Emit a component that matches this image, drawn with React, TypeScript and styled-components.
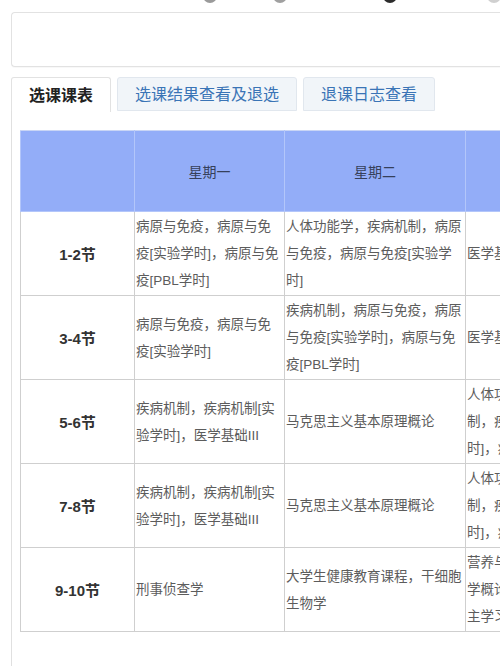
import React from "react";
import styled, { createGlobalStyle } from "styled-components";

const Global = createGlobalStyle`
  html, body {
    margin: 0;
    padding: 0;
    background: #ffffff;
    overflow: hidden;
  }
  body {
    font-family: "Liberation Sans", "Noto Sans CJK SC", sans-serif;
  }
`;

const Page = styled.div`
  width: 900px;
  height: 666px;
  overflow: hidden;
  display: flex;
  flex-direction: column;
`;

const IconStrip = styled.div`
  height: 5px;
  overflow: hidden;
  display: flex;
  align-items: flex-start;
  padding-left: 203px;
  gap: 56px;
`;

const IconStub = styled.div<{ $c: string; $gap?: number }>`
  width: 14px;
  height: 14px;
  border-radius: 50%;
  background: ${(p) => p.$c};
  margin-top: -11px;
  margin-left: ${(p) => p.$gap ?? 0}px;
  flex: none;
`;

const Body = styled.div`
  flex: 1;
  display: flex;
  flex-direction: column;
  padding: 7px 0 0 11px;
  min-height: 0;
`;

const TopBox = styled.div`
  height: 53px;
  border: 1px solid #e2e2e2;
  border-right: none;
  border-radius: 4px 0 0 4px;
  background: #fff;
  box-shadow: 0 1px 1px rgba(0, 0, 0, 0.03);
  flex: none;
`;

const TabBar = styled.div`
  display: flex;
  align-items: flex-start;
  gap: 6px;
  margin-top: 10px;
  height: 34px;
  flex: none;
`;

const Tab = styled.div<{ $active?: boolean }>`
  padding: 0 17px 2px;
  display: flex;
  align-items: center;
  font-size: 16px;
  font-family: "Noto Sans CJK SC", sans-serif;
  border: 1px solid ${(p) => (p.$active ? "#e2e2e2" : "#e1e7ee")};
  border-bottom: ${(p) => (p.$active ? "none" : "1px solid #e1e7ee")};
  border-radius: 3px 3px 0 0;
  background: ${(p) => (p.$active ? "#ffffff" : "#f1f5f9")};
  color: ${(p) => (p.$active ? "#222222" : "#3a74b6")};
  font-weight: ${(p) => (p.$active ? 700 : 400)};
  height: ${(p) => (p.$active ? "32px" : "30px")};
`;

const Panel = styled.div`
  flex: 1;
  border-left: 1px solid #e0e0e0;
  padding: 19px 0 0 8px;
`;

const Table = styled.table`
  border-collapse: collapse;
  table-layout: fixed;
  width: 760px;
  font-size: 13.5px;
  color: #5c5c5c;
`;

const HeadCell = styled.th`
  background: #93adf8;
  border: 1px solid #b3c6fa;
  border-top-color: #c9d5f5;
  color: #36405a;
  font-weight: 400;
  font-size: 14px;
  font-family: "Noto Sans CJK SC", sans-serif;
  text-align: center;
  vertical-align: middle;
  height: 80px;
  padding: 0;
`;

const Row = styled.tr`
  height: 84px;
`;

const LabelCell = styled.td`
  border: 1px solid #cfcfcf;
  text-align: center;
  vertical-align: middle;
  font-weight: 700;
  font-size: 15px;
  color: #333;
  padding: 0;
`;

const CourseCell = styled.td`
  border: 1px solid #cfcfcf;
  vertical-align: middle;
  padding: 0 1px 0 1px;
  line-height: 27px;
  white-space: nowrap;
  overflow: hidden;
`;

const Line = styled.div`
  white-space: nowrap;
`;

type RowData = { label: string; cells: string[][] };

const days = ["星期一", "星期二", "星期三", "星期四", "星期五"];

const rows: RowData[] = [
  {
    label: "1-2节",
    cells: [
      ["病原与免疫，病原与免", "疫[实验学时]，病原与免", "疫[PBL学时]"],
      ["人体功能学，疾病机制，病原", "与免疫，病原与免疫[实验学", "时]"],
      ["医学基础III"],
    ],
  },
  {
    label: "3-4节",
    cells: [
      ["病原与免疫，病原与免", "疫[实验学时]"],
      ["疾病机制，病原与免疫，病原", "与免疫[实验学时]，病原与免", "疫[PBL学时]"],
      ["医学基础III"],
    ],
  },
  {
    label: "5-6节",
    cells: [
      ["疾病机制，疾病机制[实", "验学时]，医学基础III"],
      ["马克思主义基本原理概论"],
      ["人体功能学，疾病机", "制，疾病机制[实验学", "时]，病原与免疫"],
    ],
  },
  {
    label: "7-8节",
    cells: [
      ["疾病机制，疾病机制[实", "验学时]，医学基础III"],
      ["马克思主义基本原理概论"],
      ["人体功能学，疾病机", "制，疾病机制[实验学", "时]，病原与免疫"],
    ],
  },
  {
    label: "9-10节",
    cells: [
      ["刑事侦查学"],
      ["大学生健康教育课程，干细胞", "生物学"],
      ["营养与食品卫生", "学概论，医学自", "主学习"],
    ],
  },
];

export default function App() {
  return (
    <>
      <Global />
      <Page>
        <IconStrip>
          <IconStub $c="#9a9a9a" />
          <IconStub $c="#a0a0a0" />
          <IconStub $c="#2c2c2c" $gap={40} />
          <IconStub $c="#d0d0d0" $gap={34} />
        </IconStrip>
        <Body>
          <TopBox />
          <TabBar>
            <Tab $active>选课课表</Tab>
            <Tab>选课结果查看及退选</Tab>
            <Tab>退课日志查看</Tab>
          </TabBar>
          <Panel>
            <Table>
              <colgroup>
                <col style={{ width: 114 }} />
                <col style={{ width: 150 }} />
                <col style={{ width: 181 }} />
                <col style={{ width: 160 }} />
                <col style={{ width: 155 }} />
              </colgroup>
              <thead>
                <tr>
                  <HeadCell />
                  {days.slice(0, 4).map((d, i) => (
                    <HeadCell key={d}>{i < 2 ? d : ""}</HeadCell>
                  ))}
                </tr>
              </thead>
              <tbody>
                {rows.map((r) => (
                  <Row key={r.label}>
                    <LabelCell>{r.label}</LabelCell>
                    {[0, 1, 2, 3].map((i) => (
                      <CourseCell key={i}>
                        {(r.cells[i] ?? []).map((l, j) => (
                          <Line key={j}>{l}</Line>
                        ))}
                      </CourseCell>
                    ))}
                  </Row>
                ))}
              </tbody>
            </Table>
          </Panel>
        </Body>
      </Page>
    </>
  );
}
